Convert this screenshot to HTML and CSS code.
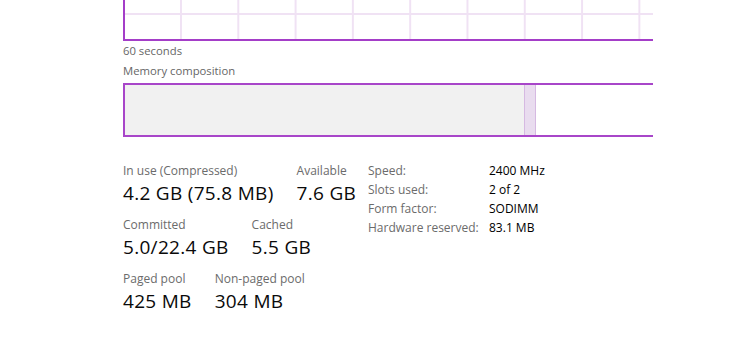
FILE: index.html
```
<!DOCTYPE html>
<html>
	<head>
		<meta charset="utf-8" />
		<title>Memory</title>
		<link rel="stylesheet" href="styles.css">
	</head>
	<body>
		<div class="panel">
			<div class="chart"></div>
			<div class="caption">60 seconds</div>
			<div class="caption title">Memory composition</div>
			<div class="composition">
				<div class="in-use"></div>
				<div class="modified"></div>
			</div>

			<div class="details">
				<div class="stats">
					<div class="stat-row">
						<div class="stat">
							<div class="label">In use (Compressed)</div>
							<div class="value">4.2 GB (75.8 MB)</div>
						</div>
						<div class="stat">
							<div class="label">Available</div>
							<div class="value">7.6 GB</div>
						</div>
					</div>
					<div class="stat-row">
						<div class="stat">
							<div class="label">Committed</div>
							<div class="value">5.0/22.4 GB</div>
						</div>
						<div class="stat">
							<div class="label">Cached</div>
							<div class="value">5.5 GB</div>
						</div>
					</div>
					<div class="stat-row">
						<div class="stat">
							<div class="label">Paged pool</div>
							<div class="value">425 MB</div>
						</div>
						<div class="stat">
							<div class="label">Non-paged pool</div>
							<div class="value">304 MB</div>
						</div>
					</div>
				</div>

				<table class="specs">
					<tr><td class="key">Speed:</td><td>2400 MHz</td></tr>
					<tr><td class="key">Slots used:</td><td>2 of 2</td></tr>
					<tr><td class="key">Form factor:</td><td>SODIMM</td></tr>
					<tr><td class="key">Hardware reserved:</td><td>83.1 MB</td></tr>
				</table>
			</div>
		</div>
	</body>
</html>
```

FILE: styles.css
```
body {
	margin: 0;
	background: #fff;
	font-family: "Open Sans", "Noto Sans", sans-serif;
	color: #000;
}

.panel {
	padding-left: 123px;
	width: 530px;
}

/* usage chart, top is cut off */
.chart {
	height: 39px;
	border-left: 2px solid #a43ec8;
	border-bottom: 2px solid #a43ec8;
	background-color: #fff;
	background-image:
		linear-gradient(to bottom, transparent 13px, #f0e2f4 13px, #f0e2f4 15px, transparent 15px),
		linear-gradient(to right, #f0e2f4 2px, transparent 2px);
	background-size: 100% 100%, 57.3px 100%;
	background-position: 0 0, 55px 0;
	background-repeat: no-repeat, repeat-x;
}

.caption {
	font-size: 11.3px;
	line-height: 15px;
	color: #666;
	margin-top: 2px;
}

.caption.title {
	margin-top: 5px;
}

.composition {
	display: flex;
	height: 50px;
	margin-top: 5px;
	border: 2px solid #a846c9;
	border-right: none;
	background: #fff;
}

.in-use {
	width: 399px;
	background: #f1f1f1;
}

.modified {
	width: 10px;
	background: #e9dcef;
	border-left: 1px solid #d6b9e2;
	border-right: 1px solid #d6b9e2;
}

.details {
	display: flex;
	align-items: flex-start;
	margin-top: 26px;
}

.stats {
	width: 245px;
}

.stat-row {
	display: flex;
	gap: 23px;
	margin-bottom: 10px;
}

.label {
	font-size: 12px;
	line-height: 16px;
	color: #6b6b6b;
}

.value {
	font-size: 19px;
	line-height: 28px;
	letter-spacing: 0.3px;
	color: #0a0a0a;
	white-space: nowrap;
}

.specs {
	border-collapse: collapse;
	font-size: 12px;
}

.specs td {
	padding: 0;
	height: 19px;
	line-height: 16px;
	color: #000;
	vertical-align: top;
}

.specs td.key {
	width: 121px;
	color: #6b6b6b;
}
```
